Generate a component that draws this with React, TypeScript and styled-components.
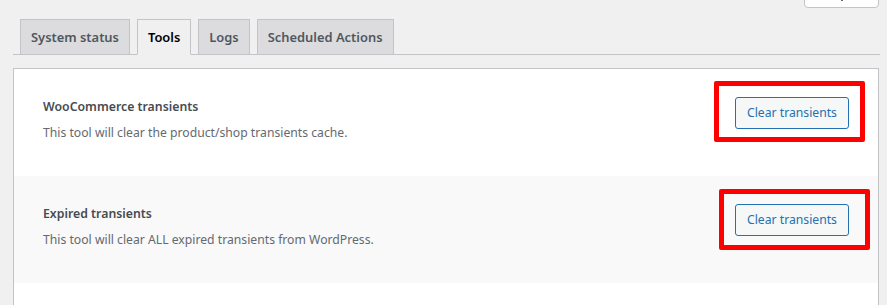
import React from 'react';
import styled, { createGlobalStyle } from 'styled-components';

const GlobalStyle = createGlobalStyle`
  html, body {
    margin: 0;
    padding: 0;
    background: #f0f0f1;
    overflow: hidden;
  }
  body {
    font-family: 'Noto Sans', 'Open Sans', sans-serif;
    color: #3c434a;
  }
`;

const Page = styled.div`
  width: 887px;
  height: 305px;
  overflow: hidden;
`;

const TopBar = styled.div`
  height: 19px;
  display: flex;
  justify-content: flex-end;
  padding-right: 8px;
`;

const HelpTab = styled.div`
  width: 75px;
  height: 30px;
  margin-top: -22px;
  box-sizing: border-box;
  background: #fff;
  border: 1px solid #c3c4c7;
  border-radius: 0 0 4px 4px;
  display: flex;
  align-items: flex-end;
  justify-content: center;

  &::after {
    content: '';
    width: 2px;
    height: 2px;
    margin-bottom: 6px;
    background: #646970;
  }
`;

const TabWrapper = styled.nav`
  margin: 0 7px 0 13px;
  border-bottom: 1px solid #c3c4c7;
  display: flex;
  height: 35px;
`;

const Tab = styled.a<{ $active?: boolean }>`
  margin-left: 7px;
  height: 36px;
  box-sizing: border-box;
  padding: 0 10px;
  display: flex;
  align-items: center;
  font-size: 12.9px;
  font-weight: 600;
  line-height: 24px;
  border: 1px solid #c3c4c7;
  border-bottom-color: ${({ $active }) => ($active ? '#f0f0f1' : '#c3c4c7')};
  background: ${({ $active }) => ($active ? '#f0f0f1' : '#dcdcde')};
  color: ${({ $active }) => ($active ? '#000' : '#50575e')};
  white-space: nowrap;
  cursor: pointer;
`;

const Panel = styled.div`
  margin: 13px 8px 0 13px;
  padding-bottom: 60px;
  background: #fff;
  border: 1px solid #c3c4c7;
`;

const ToolRow = styled.div<{ $striped?: boolean }>`
  display: flex;
  justify-content: space-between;
  align-items: flex-start;
  padding: 28px 29px 33px 29px;
  background: ${({ $striped }) => ($striped ? '#f9f9f9' : '#fff')};
`;

const ToolInfo = styled.div`
  display: flex;
  flex-direction: column;
  gap: 6px;
`;

const ToolName = styled.strong`
  font-size: 12.3px;
  font-weight: 600;
  line-height: 20px;
  color: #464c52;
`;

const ToolDescription = styled.p`
  margin: 0;
  font-size: 12.2px;
  line-height: 20px;
  color: #646970;
`;

const Highlight = styled.div<{ $dx: number; $dy: number }>`
  position: relative;

  &::before {
    content: '';
    position: absolute;
    left: ${({ $dx }) => -21 + $dx}px;
    right: ${({ $dx }) => -16 - $dx}px;
    top: ${({ $dy }) => -16 + $dy}px;
    bottom: ${({ $dy }) => -13 - $dy}px;
    border: 5px solid #ff0000;
    border-radius: 2px;
    pointer-events: none;
  }
`;

const RunButton = styled.button`
  height: 32px;
  width: 114px;
  padding: 0 8px;
  font-family: inherit;
  font-size: 12.2px;
  line-height: 30px;
  color: #2271b1;
  background: #f6f7f7;
  border: 1px solid #2271b1;
  border-radius: 3px;
  white-space: nowrap;
  cursor: pointer;
`;

const tools = [
  {
    name: 'WooCommerce transients',
    description: 'This tool will clear the product/shop transients cache.',
    dx: 0,
    dy: 0,
  },
  {
    name: 'Expired transients',
    description: 'This tool will clear ALL expired transients from WordPress.',
    dx: 5,
    dy: 1,
  },
];

const App = (): JSX.Element => (
  <Page>
    <GlobalStyle />
    <TopBar>
      <HelpTab />
    </TopBar>
    <TabWrapper>
      <Tab>System status</Tab>
      <Tab $active>Tools</Tab>
      <Tab>Logs</Tab>
      <Tab>Scheduled Actions</Tab>
    </TabWrapper>
    <Panel>
      {tools.map((tool, i) => (
        <ToolRow key={tool.name} $striped={i % 2 === 1}>
          <ToolInfo>
            <ToolName>{tool.name}</ToolName>
            <ToolDescription>{tool.description}</ToolDescription>
          </ToolInfo>
          <Highlight $dx={tool.dx} $dy={tool.dy}>
            <RunButton type="button">Clear transients</RunButton>
          </Highlight>
        </ToolRow>
      ))}
    </Panel>
  </Page>
);

export default App;
